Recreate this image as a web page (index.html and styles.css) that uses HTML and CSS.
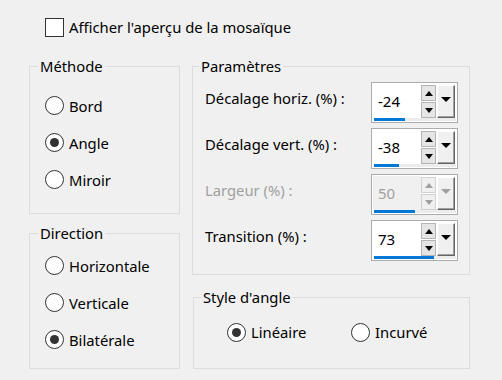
FILE: index.html
```html
<!DOCTYPE html>
<html lang="fr">
<head>
    <meta charset="UTF-8">
    <title>Mosaïque</title>
    <link rel="stylesheet" href="styles.css">
</head>
<body>
    <div class="dialog">
        <label class="check-row">
            <span class="checkbox"></span>
            Afficher l'aperçu de la mosaïque
        </label>

        <div class="columns">
            <div class="col-left">
                <fieldset class="group method">
                    <legend>Méthode</legend>
                    <div class="radio"><span class="dot"></span>Bord</div>
                    <div class="radio"><span class="dot checked"></span>Angle</div>
                    <div class="radio"><span class="dot"></span>Miroir</div>
                </fieldset>

                <fieldset class="group direction">
                    <legend>Direction</legend>
                    <div class="radio"><span class="dot"></span>Horizontale</div>
                    <div class="radio"><span class="dot"></span>Verticale</div>
                    <div class="radio"><span class="dot checked"></span>Bilatérale</div>
                </fieldset>
            </div>

            <div class="col-right">
                <fieldset class="group params">
                    <legend>Paramètres</legend>

                    <div class="param-row">
                        <span class="param-label">Décalage horiz. (%) :</span>
                        <div class="spin">
                            <div class="spin-top">
                                <div class="spin-value">-24</div>
                                <div class="spin-buttons">
                                    <span class="spin-btn"><span class="arrow-up"></span></span>
                                    <span class="spin-btn"><span class="arrow-down"></span></span>
                                </div>
                                <span class="drop-btn"><span class="arrow-drop"></span></span>
                            </div>
                            <div class="spin-track"><div class="spin-fill" style="width: 38%"></div></div>
                        </div>
                    </div>

                    <div class="param-row">
                        <span class="param-label">Décalage vert. (%) :</span>
                        <div class="spin">
                            <div class="spin-top">
                                <div class="spin-value">-38</div>
                                <div class="spin-buttons">
                                    <span class="spin-btn"><span class="arrow-up"></span></span>
                                    <span class="spin-btn"><span class="arrow-down"></span></span>
                                </div>
                                <span class="drop-btn"><span class="arrow-drop"></span></span>
                            </div>
                            <div class="spin-track"><div class="spin-fill" style="width: 31%"></div></div>
                        </div>
                    </div>

                    <div class="param-row disabled">
                        <span class="param-label">Largeur (%) :</span>
                        <div class="spin">
                            <div class="spin-top">
                                <div class="spin-value">50</div>
                                <div class="spin-buttons">
                                    <span class="spin-btn"><span class="arrow-up"></span></span>
                                    <span class="spin-btn"><span class="arrow-down"></span></span>
                                </div>
                                <span class="drop-btn"><span class="arrow-drop"></span></span>
                            </div>
                            <div class="spin-track"><div class="spin-fill" style="width: 50%"></div></div>
                        </div>
                    </div>

                    <div class="param-row">
                        <span class="param-label">Transition (%) :</span>
                        <div class="spin">
                            <div class="spin-top">
                                <div class="spin-value">73</div>
                                <div class="spin-buttons">
                                    <span class="spin-btn"><span class="arrow-up"></span></span>
                                    <span class="spin-btn"><span class="arrow-down"></span></span>
                                </div>
                                <span class="drop-btn"><span class="arrow-drop"></span></span>
                            </div>
                            <div class="spin-track"><div class="spin-fill" style="width: 73%"></div></div>
                        </div>
                    </div>
                </fieldset>

                <fieldset class="group corner">
                    <legend>Style d'angle</legend>
                    <div class="corner-row">
                        <div class="radio"><span class="dot checked"></span>Linéaire</div>
                        <div class="radio"><span class="dot"></span>Incurvé</div>
                    </div>
                </fieldset>
            </div>
        </div>
    </div>
</body>
</html>
```

FILE: styles.css
```css
* {
    box-sizing: border-box;
}

body {
    margin: 0;
    background: #f0f0f0;
    color: #000;
    font-family: "Noto Sans", "Open Sans", sans-serif;
    font-size: 14.8px;
    line-height: 20px;
}

.dialog {
    width: 502px;
    height: 380px;
    padding: 17px 0 0 29px;
}

/* top checkbox */
.check-row {
    display: flex;
    align-items: center;
    height: 20px;
    margin-left: 16px;
}

.checkbox {
    width: 19px;
    height: 19px;
    margin-right: 5px;
    border: 1px solid #333;
    background: #fff;
}

.columns {
    display: flex;
    gap: 12px;
    margin-top: 19px;
}

.col-left {
    display: flex;
    flex-direction: column;
    gap: 9px;
    width: 151px;
}

.col-right {
    display: flex;
    flex-direction: column;
    gap: 12px;
    width: 278px;
}

/* group boxes: legend sits at padding start, so pull it back */
.group {
    margin: 0;
    min-width: 0;
    border: 1px solid #dcdcdc;
}

.group legend {
    padding: 0 2px;
    line-height: 20px;
}

.method {
    height: 158px;
    padding: 11px 0 0 15px;
}

.direction {
    height: 146px;
    padding: 4px 0 0 15px;
}

.method legend,
.direction legend {
    margin-left: -7px;
}

.params {
    height: 219px;
    padding: 6px 11px 0 12px;
}

.params legend {
    margin-left: -6px;
}

.corner {
    height: 82px;
    padding: 15px 0 0 33px;
    margin-left: 1px;
}

.corner legend {
    margin-left: -26px;
}

/* radio buttons */
.radio {
    display: flex;
    align-items: center;
    height: 37px;
}

.dot {
    width: 19px;
    height: 19px;
    margin-right: 5px;
    border: 1px solid #333;
    border-radius: 50%;
    background: #fff;
    display: flex;
    align-items: center;
    justify-content: center;
}

.dot.checked::after {
    content: "";
    width: 9px;
    height: 9px;
    border-radius: 50%;
    background: #333;
}

.corner-row {
    display: grid;
    grid-template-columns: 124px auto;
}

.corner-row .radio {
    height: 20px;
}

/* parameter rows */
.param-row {
    display: flex;
    justify-content: space-between;
    margin-bottom: 5px;
}

.param-label {
    padding-top: 6px;
}

.disabled .param-label,
.disabled .spin-value {
    color: #a0a0a0;
}

.spin {
    width: 87px;
    height: 41px;
    padding: 1px 2px 1px 1px;
    border: 1px solid #acacac;
    background: #fff;
}

.spin-top {
    display: flex;
    height: 34px;
}

.spin-value {
    width: 49px;
    padding: 7px 0 0 5px;
    font-size: 15px;
}

.disabled .spin-value {
    background: #f0f0f0;
}

.spin-buttons {
    display: flex;
    flex-direction: column;
    gap: 1px;
    width: 15px;
    padding-top: 1px;
}

.spin-btn {
    flex: 1;
    display: flex;
    align-items: center;
    justify-content: center;
    background: #e5e5e5;
    border: 1px solid #b4b4b4;
}

.arrow-up,
.arrow-down {
    width: 0;
    height: 0;
    border-left: 4px solid transparent;
    border-right: 4px solid transparent;
}

.arrow-up {
    border-bottom: 5px solid #000;
}

.arrow-down {
    border-top: 5px solid #000;
}

.drop-btn {
    display: flex;
    justify-content: center;
    width: 18px;
    margin: 1px 0 0 1px;
    padding-top: 11px;
    background: #f0f0f0;
    border: 1px solid;
    border-color: #fff #646464 #646464 #fff;
    box-shadow: inset -1px -1px #a0a0a0;
}

.arrow-drop {
    width: 0;
    height: 0;
    border-left: 5px solid transparent;
    border-right: 5px solid transparent;
    border-top: 5px solid #000;
}

.disabled .arrow-up {
    border-bottom-color: #a0a0a0;
}

.disabled .arrow-down,
.disabled .arrow-drop {
    border-top-color: #a0a0a0;
}

.disabled .spin-btn {
    background: #f0f0f0;
    border-color: #d0d0d0;
}

.spin-track {
    height: 3px;
    width: 82px;
    margin-left: 1px;
    background: #ececec;
}

.spin-fill {
    height: 100%;
    background: #0078d7;
}
```
